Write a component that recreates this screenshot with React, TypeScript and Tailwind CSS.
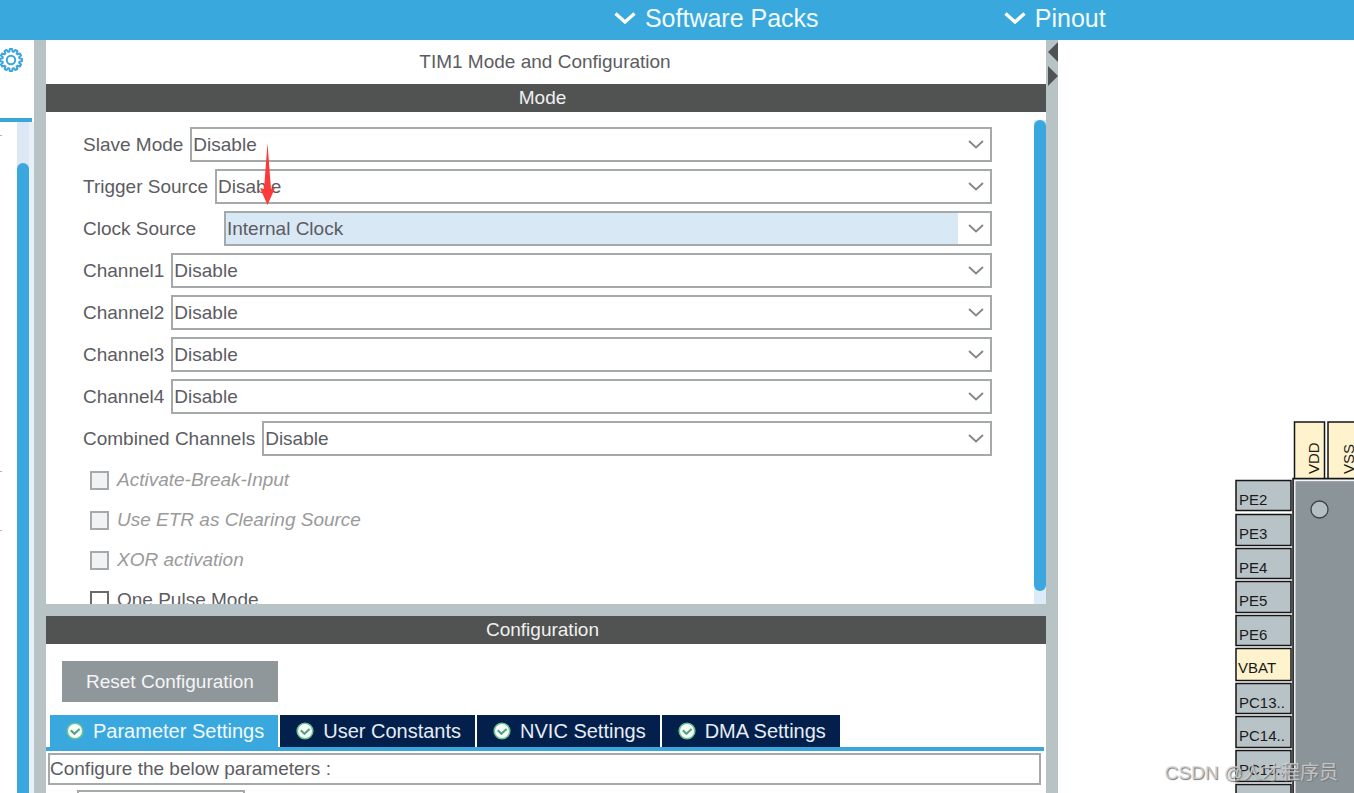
const modeFields = [
  { id: "slave", label: "Slave Mode", value: "Disable" },
  { id: "trigger", label: "Trigger Source", value: "Disable" },
  { id: "clock", label: "Clock Source", value: "Internal Clock", active: true },
  { id: "ch1", label: "Channel1", value: "Disable" },
  { id: "ch2", label: "Channel2", value: "Disable" },
  { id: "ch3", label: "Channel3", value: "Disable" },
  { id: "ch4", label: "Channel4", value: "Disable" },
  { id: "combined", label: "Combined Channels", value: "Disable" },
];

const modeOptions = [
  { id: "break", label: "Activate-Break-Input", disabled: true },
  { id: "etr", label: "Use ETR as Clearing Source", disabled: true },
  { id: "xor", label: "XOR activation", disabled: true },
  { id: "pulse", label: "One Pulse Mode", disabled: false },
];

const tabs = ["Parameter Settings", "User Constants", "NVIC Settings", "DMA Settings"];

const pins = [
  { name: "PE2", y: 440, h: 31 },
  { name: "PE3", y: 474, h: 32 },
  { name: "PE4", y: 508, h: 31 },
  { name: "PE5", y: 541, h: 32 },
  { name: "PE6", y: 575, h: 31 },
  { name: "VBAT", y: 608, h: 33, power: true },
  { name: "PC13..", y: 643, h: 31 },
  { name: "PC14..", y: 676, h: 32 },
  { name: "PC15..", y: 710, h: 32 },
  { name: "", y: 744, h: 32 },
];

// outline of a 12-tooth gear around 0,0
const gearPoints = Array.from({ length: 12 }, (_, i) => {
  const at = (r: number, deg: number) => {
    const a = ((i * 30 + deg) * Math.PI) / 180;
    return `${(r * Math.cos(a)).toFixed(2)},${(r * Math.sin(a)).toFixed(2)}`;
  };
  return [at(8.6, -11), at(11, -6), at(11, 6), at(8.6, 11)].join(" ");
}).join(" ");

const MenuItem = ({ label }: { label: string }) => {
  return (
    <button className="flex w-1/4 items-center justify-center gap-[9px] text-[25px] leading-[30px] text-[#f2fafe]">
      <svg width="22" height="14" viewBox="0 0 22 14" fill="none" stroke="#fff" strokeWidth="3.4">
        <path d="M1.5 2.5l9.5 8.5 9.5-8.5" />
      </svg>
      {label}
    </button>
  );
};

const SectionBar = ({ title }: { title: string }) => {
  return (
    <h2 className="h-[28px] shrink-0 bg-[#505352] pr-[7px] text-center leading-[28px] text-[#f0f0f0]">
      {title}
    </h2>
  );
};

const ModeField = ({ id, label, value, active }: { id: string; label: string; value: string; active?: boolean }) => {
  return (
    <div className={active ? "flex items-center gap-7" : "flex items-center gap-[7px]"}>
      <label htmlFor={id}>{label}</label>
      <div className="relative h-[35px] flex-1 border-2 border-[#a6a9a9]">
        <select
          id={id}
          className={
            active
              ? "h-full w-full appearance-none border-r-[32px] border-white bg-[#d9e8f5] pl-px outline-none"
              : "h-full w-full appearance-none bg-white pl-px outline-none"
          }
        >
          <option>{value}</option>
        </select>
        <svg
          className="pointer-events-none absolute top-[11px] right-[6px]"
          width="16"
          height="9"
          viewBox="0 0 16 9"
          fill="none"
          stroke="#858585"
          strokeWidth="1.8"
        >
          <path d="M1 1l7 6.5L15 1" />
        </svg>
      </div>
    </div>
  );
};

const CheckIcon = () => {
  return (
    <svg width="18" height="18" viewBox="0 0 18 18" fill="none">
      <circle cx="9" cy="9" r="7.8" fill="#f9fffa" stroke="#6cc392" strokeWidth="1.6" />
      <path d="M4.8 8.2l3.6 3.6L13.6 7" stroke="#4fa67a" strokeWidth="2" />
    </svg>
  );
};

const SidePanel = () => {
  return (
    <aside className="flex w-[34px] shrink-0 flex-col">
      <div className="h-[78px] pt-2">
        <button aria-label="Settings" className="block w-6">
          <svg width="24" height="24" viewBox="-13 -13 24 24" fill="none" stroke="#3ca6dc">
            <g transform="translate(-2 -1)">
              <polygon points={gearPoints} strokeWidth="2" strokeLinejoin="round" />
              <circle r="4.2" strokeWidth="2" />
            </g>
          </svg>
        </button>
      </div>
      <div className="mr-[2px] h-1 bg-[#39a6dc]"></div>
      <div className="flex flex-1">
        <div className="w-[17px]">
          <div className="mt-[13px] h-px w-[2px] bg-[#b5b5b5]"></div>
          <div className="mt-[335px] h-px w-[2px] bg-[#b5b5b5]"></div>
          <div className="mt-[58px] h-px w-[2px] bg-[#b5b5b5]"></div>
        </div>
        <div className="flex w-3 flex-col bg-[#dce8f5] pt-[41px]">
          <div className="flex-1 rounded-t-md bg-[#3aa7de]"></div>
        </div>
        <div className="w-[5px] bg-[#eaf0f8]"></div>
      </div>
    </aside>
  );
};

const ModeSection = () => {
  return (
    <section className="flex min-h-0 flex-1 flex-col">
      <h1 className="h-11 shrink-0 pr-[2px] text-center leading-[44px]">TIM1 Mode and Configuration</h1>
      <SectionBar title="Mode" />
      <div className="relative flex min-h-0 flex-1 overflow-hidden">
        <form className="flex-1 pt-[15px] pr-[42px] pl-[37px]">
          <div className="flex flex-col gap-[7px]">
            {modeFields.map((field) => (
              <ModeField key={field.id} {...field} />
            ))}
          </div>
          <div className="mt-[10px] flex flex-col gap-3 pl-[7px]">
            {modeOptions.map((option) => (
              <div key={option.id} className="flex h-7 items-center gap-2">
                <input
                  type="checkbox"
                  id={option.id}
                  disabled={option.disabled}
                  className="size-[19px] appearance-none border-2 border-[#6a6a6a] bg-white disabled:border-[#a6a9a9] disabled:bg-[#f0f2f3]"
                />
                <label htmlFor={option.id} className={option.disabled ? "text-[#9a9a9a] italic" : ""}>
                  {option.label}
                </label>
              </div>
            ))}
          </div>
        </form>
        <div className="mt-2 flex w-3 flex-col bg-[#dcecf7] pb-[13px]">
          <div className="flex-1 rounded-md bg-[#3aa7de]"></div>
        </div>
        <svg className="pointer-events-none absolute top-[31px] left-[214px]" width="15" height="62" viewBox="0 0 15 62">
          <path d="M7.5 0L11 46L15 45L7.5 62L0 45L4 46Z" fill="#fc3a3a" />
        </svg>
      </div>
    </section>
  );
};

const ConfigSection = () => {
  return (
    <section className="flex h-[177px] shrink-0 flex-col overflow-hidden">
      <SectionBar title="Configuration" />
      <div className="px-4 pt-[17px]">
        <button className="h-[41px] bg-[#8f979b] px-6 text-[#f5f5f5]">Reset Configuration</button>
      </div>
      <div className="mt-[13px] mr-[2px] flex shrink-0 gap-[2px] border-b-4 border-[#39a6dc] pl-1" role="tablist">
        {tabs.map((tab, i) => (
          <button
            key={tab}
            role="tab"
            aria-selected={i === 0}
            className={
              i === 0
                ? "flex h-8 items-center gap-[9px] bg-[#39a8de] pr-[14px] pl-4 text-[20px] text-[#f2fafe]"
                : "flex h-8 items-center gap-[9px] bg-[#03204c] pr-[14px] pl-4 text-[20px] text-[#e6edf5]"
            }
          >
            <CheckIcon />
            {tab}
          </button>
        ))}
      </div>
      <div className="mt-[2px] flex shrink-0 pr-[5px] pl-[2px]">
        <input
          readOnly
          aria-label="Description"
          value="Configure the below parameters :"
          className="h-8 w-full border-2 border-[#a6a9a9] outline-none"
        />
      </div>
      <div className="mt-[5px] ml-[31px] h-6 w-[168px] shrink-0 border-2 border-[#a6a9a9]"></div>
    </section>
  );
};

const PinoutView = () => {
  return (
    <main className="relative w-[296px] shrink-0 overflow-hidden">
      <svg className="block h-full w-full" fontFamily="Liberation Sans, Arial, sans-serif" fontSize="15">
        <g stroke="#151515" strokeWidth="1.5">
          <rect x="236.5" y="382" width="30" height="58" fill="#fef3cc" />
          <rect x="270" y="382" width="30" height="58" fill="#fef3cc" />
          {pins.map((pin) => (
            <rect key={pin.y} x="178" y={pin.y + 0.5} width="55" height={pin.h - 1} fill={pin.power ? "#fef3cc" : "#b8c3c8"} />
          ))}
          <rect x="235" y="438.5" width="400" height="800" fill="#8a9499" />
        </g>
        <rect x="236.8" y="440.5" width="400" height="800" fill="none" stroke="#f4f6f7" strokeWidth="1.4" />
        <circle cx="261.5" cy="469.5" r="8.5" fill="#b3bfc3" stroke="#3c4144" strokeWidth="1.3" />
        <g fill="#1a1a1a">
          {pins.map((pin) => (
            <text key={pin.y} x={pin.power ? 180 : 181} y={pin.y + 25}>
              {pin.name}
            </text>
          ))}
          <text transform="translate(261 434) rotate(-90)">VDD</text>
          <text transform="translate(296 434) rotate(-90)">VSS</text>
        </g>
      </svg>
      <p className="absolute right-4 bottom-[6px] text-[19px] leading-7 whitespace-nowrap text-[#d4d4d4]/80 [text-shadow:1px_1px_1px_#777]">
        CSDN @人才程序员
      </p>
    </main>
  );
};

const App = () => {
  return (
    <div className="flex h-screen flex-col overflow-hidden bg-white font-['Liberation_Sans',Arial,'Noto_Sans_CJK_SC',sans-serif] text-[19px] leading-6 text-[#5c5c62]">
      <nav className="flex h-10 shrink-0 items-center justify-end bg-[#38a8dd] pb-1">
        <MenuItem label="Software Packs" />
        <MenuItem label="Pinout" />
        <div className="w-[130px] shrink-0"></div>
      </nav>
      <div className="flex min-h-0 flex-1">
        <SidePanel />
        <div className="w-3 shrink-0 bg-[#b8c3c6]"></div>
        <div className="flex min-w-0 flex-1 flex-col">
          <ModeSection />
          <div className="h-3 shrink-0 bg-[#b8c3c8]"></div>
          <ConfigSection />
        </div>
        <div className="w-3 shrink-0 bg-[#b8c3c6] pt-[2px]">
          <svg width="12" height="46" viewBox="0 0 12 46" fill="#505355">
            <path d="M12 0v20L2 10z" />
            <path d="M2 24v20l10-10z" />
          </svg>
        </div>
        <PinoutView />
      </div>
    </div>
  );
};

export default App;
